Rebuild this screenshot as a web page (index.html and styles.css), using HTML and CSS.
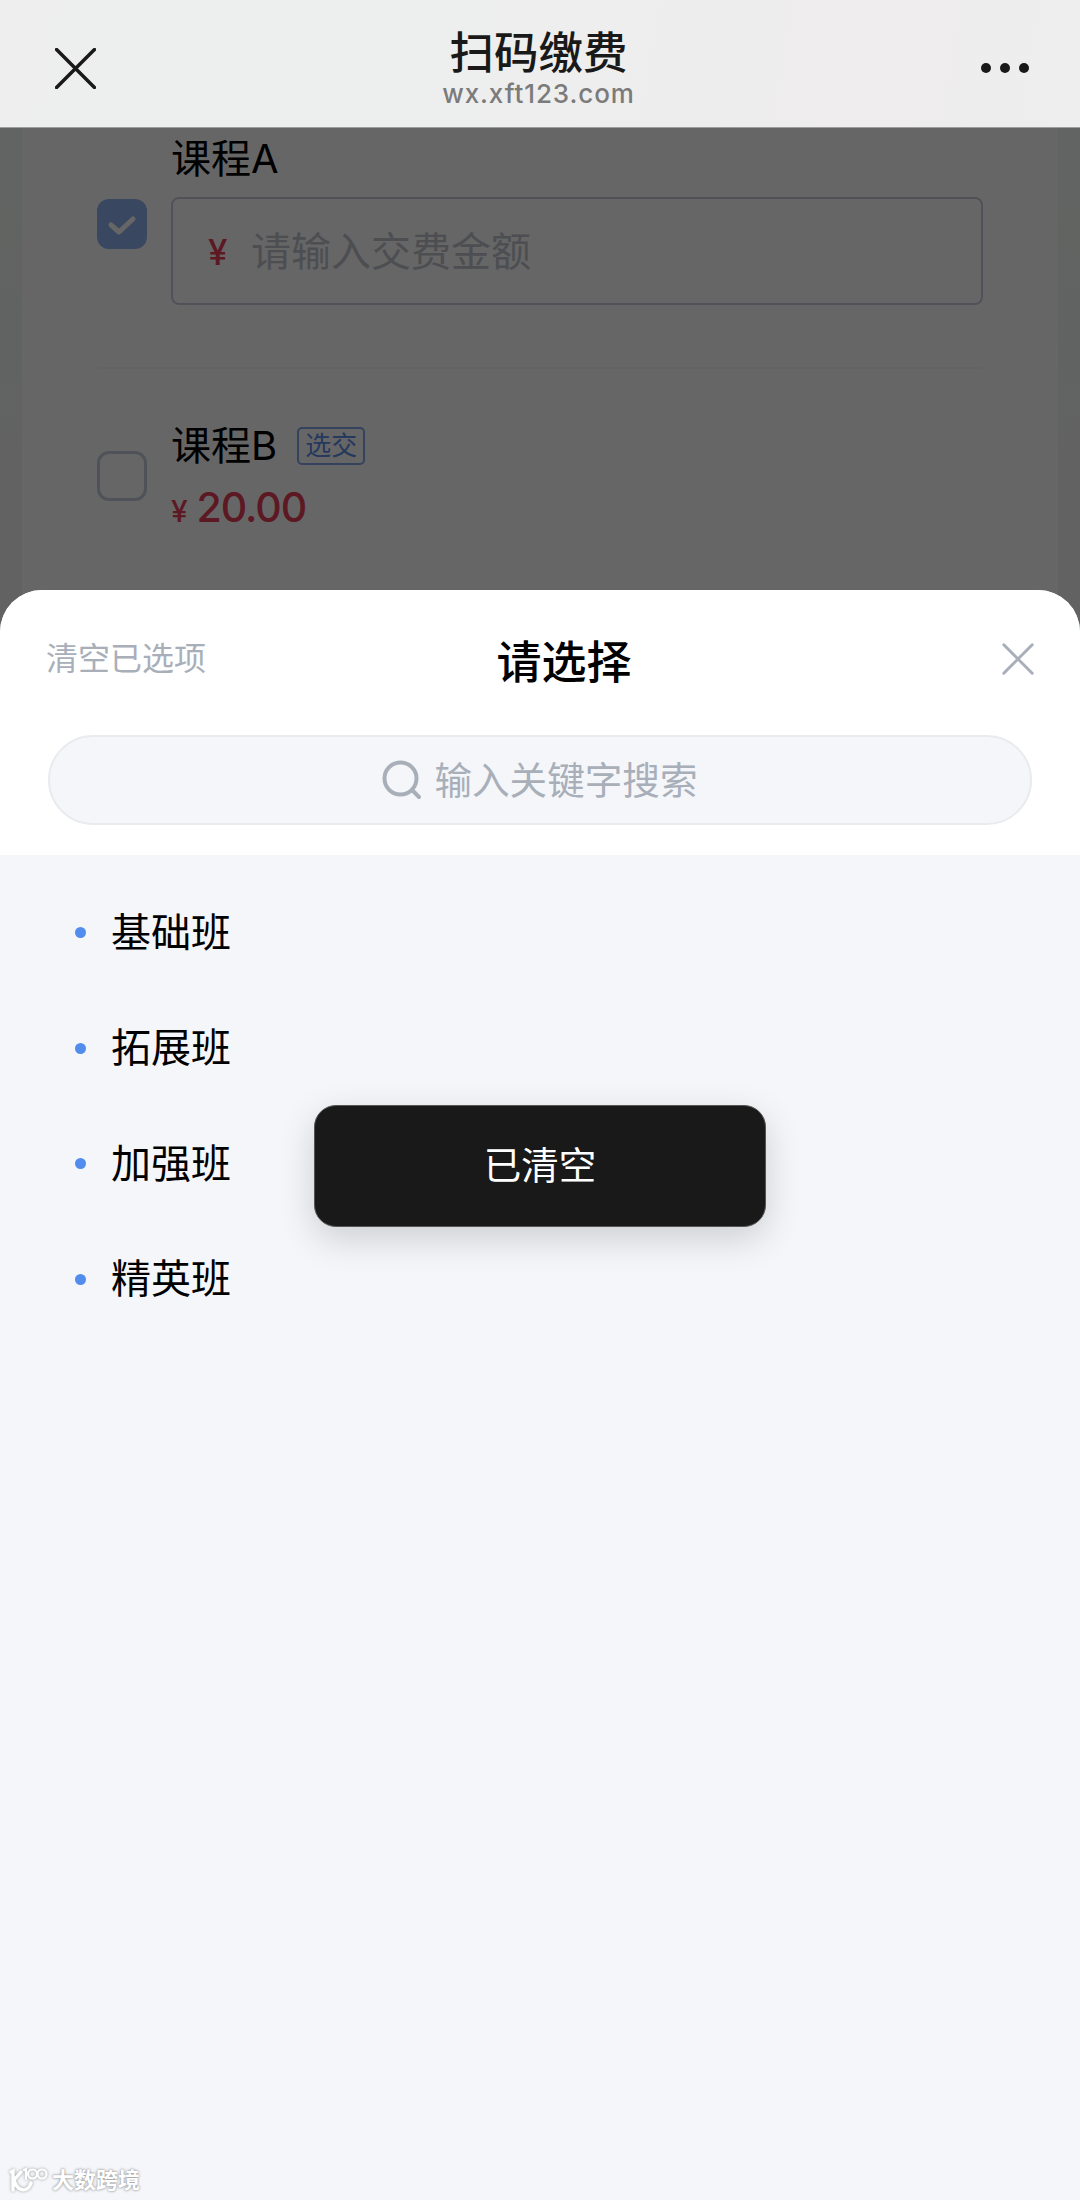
FILE: index.html
```
<!DOCTYPE html>
<html lang="zh-CN">
<head>
  <meta charset="UTF-8">
  <meta name="viewport" content="width=device-width, initial-scale=1.0">
  <title>扫码缴费</title>
  <link rel="stylesheet" href="styles.css">
</head>
<body>

  <header class="navbar">
    <svg class="nav-close" viewBox="0 0 40 40">
      <path d="M1.5 1.5 L38.5 38.5 M38.5 1.5 L1.5 38.5"/>
    </svg>
    <div class="nav-title">
      <h1>扫码缴费</h1>
      <p>wx.xft123.com</p>
    </div>
    <div class="nav-more"><i></i><i></i><i></i></div>
  </header>

  <main class="page">
    <div class="card">
      <div class="course course-a">
        <span class="checkbox checked">
          <svg viewBox="0 0 50 50"><path d="M14 26 L22 33 L36 20"/></svg>
        </span>
        <div class="course-info">
          <div class="course-name">课程A</div>
          <div class="amount-input">
            <span class="yen">¥</span>
            <span class="placeholder">请输入交费金额</span>
          </div>
        </div>
      </div>
      <div class="course course-b">
        <span class="checkbox"></span>
        <div class="course-info">
          <div class="course-name">课程B <span class="tag">选交</span></div>
          <div class="price"><span class="yen-small">¥</span><span>20.00</span></div>
        </div>
      </div>
    </div>
    <div class="mask"></div>
  </main>

  <!-- Bottom sheet -->
  <section class="sheet">
    <div class="sheet-head">
      <span class="clear">清空已选项</span>
      <h2>请选择</h2>
      <svg class="sheet-close" viewBox="0 0 32 32">
        <path d="M1.8 1.8 L30.2 30.2 M30.2 1.8 L1.8 30.2"/>
      </svg>
    </div>
    <div class="search-wrap">
      <div class="search">
        <svg class="search-icon" viewBox="0 0 40 40">
          <circle cx="18.5" cy="18.5" r="16"/>
          <path d="M30 30 L37 37"/>
        </svg>
        <span>输入关键字搜索</span>
      </div>
    </div>
    <ul class="class-list">
      <li>基础班</li>
      <li>拓展班</li>
      <li>加强班</li>
      <li>精英班</li>
    </ul>
    <div class="watermark">
      <svg viewBox="0 0 42 28">
        <path d="M3 6 L5 5 V24 M13 6 L6 14 C9 26 20 27 23 17"/>
        <path class="thin" d="M16 4 L18 3 V13"/>
        <circle class="thin" cx="24.5" cy="8" r="4.5"/>
        <circle class="thin" cx="34" cy="8" r="4.5"/>
      </svg>
      <span>大数跨境</span>
    </div>
  </section>

  <div class="toast">已清空</div>

</body>
</html>
```
FILE: styles.css
```
* {
  margin: 0;
  padding: 0;
  box-sizing: border-box;
}

body {
  position: relative;
  width: 1080px;
  height: 2200px;
  display: flex;
  flex-direction: column;
  overflow: hidden;
  background: #f4f6fa;
  color: #000;
  font-family: Inter, "Noto Sans CJK SC", sans-serif;
}

svg {
  display: block;
  fill: none;
  stroke-linecap: round;
}

/* Top bar */
.navbar {
  height: 128px;
  padding: 0 51px 0 55px;
  display: flex;
  justify-content: space-between;
  align-items: center;
  background: linear-gradient(100deg, #eeeeee 0%, #edeeee 28%, #eeeeee 50%, #efedee 82%, #eeeeee 100%);
  border-bottom: 1px solid #9b9e9d;
}

.nav-close {
  width: 41px;
  height: 41px;
  margin-top: 9px;
  stroke: #191919;
  stroke-width: 3.4;
}

.nav-title {
  padding-top: 7px;
  text-align: center;
}

.nav-title h1 {
  margin-top: 4px;
  font-size: 44.5px;
  font-weight: 500;
  line-height: 50px;
  color: #191919;
}

.nav-title p {
  font-size: 26px;
  font-weight: 500;
  line-height: 32px;
  letter-spacing: 0.9px;
  color: #7b7b7b;
}

.nav-more {
  display: flex;
  gap: 9px;
  margin-top: 9px;
}

.nav-more i {
  width: 10px;
  height: 10px;
  border-radius: 50%;
  background: #191919;
}

/* Page under the mask */
.page {
  position: relative;
  height: 511px;
  padding: 0 22px;
  background: linear-gradient(#f4faf7 0%, #f3f7f5 45%, #f5f5f5 80%);
}

.mask {
  position: absolute;
  inset: 0;
  background: rgba(0, 0, 0, 0.6);
}

.card {
  height: 100%;
  padding: 0 75px;
  background: #fff;
}

.course {
  display: flex;
  gap: 24px;
}

.course-a {
  height: 241px;
  padding-top: 6px;
  border-bottom: 2px solid #f7f7f7;
}

.course-b {
  padding-top: 52px;
}

.checkbox {
  flex: none;
  width: 50px;
  height: 50px;
  border: 3px solid #c6cede;
  border-radius: 12px;
}

.checkbox.checked {
  margin-top: 65px;
  border: none;
  background: #8fb2f0;
}

.course-b .checkbox {
  margin-top: 30px;
}

.checked svg {
  stroke: #fff;
  stroke-width: 5;
  stroke-linejoin: round;
}

.course-info {
  flex: 1;
}

.course-name {
  display: flex;
  align-items: center;
  gap: 20px;
  height: 50px;
  font-size: 40px;
  line-height: 50px;
}

.amount-input {
  height: 108px;
  margin-top: 13px;
  padding-left: 35px;
  display: flex;
  align-items: center;
  border: 2px solid #c8cedb;
  border-radius: 8px;
}

.yen {
  width: 43px;
  padding-top: 2px;
  font-size: 35px;
  font-weight: 500;
  color: #e84058;
}

.placeholder {
  padding-bottom: 5px;
  font-size: 40px;
  color: #c0c4cd;
}

.tag {
  height: 38px;
  padding: 0 6px;
  border: 2px solid #82a6e8;
  border-radius: 5px;
  font-size: 26px;
  line-height: 33px;
  color: #5c8de8;
}

.price {
  display: flex;
  align-items: baseline;
  gap: 10px;
  margin-top: 11px;
  font-size: 41px;
  font-weight: 500;
  line-height: 50px;
  letter-spacing: -1.1px;
  color: #e84058;
}

.yen-small {
  font-size: 30px;
}

/* Bottom sheet */
.sheet {
  flex: 1;
  position: relative;
  margin-top: -49px;
  display: flex;
  flex-direction: column;
  border-radius: 42px 42px 0 0;
  background: #f4f6fa;
  overflow: hidden;
}

.sheet-head {
  height: 145px;
  padding: 0 46px;
  display: flex;
  justify-content: space-between;
  background: #fff;
}

.clear {
  margin-top: 49px;
  font-size: 32px;
  line-height: 40px;
  color: #a8afb9;
}

.sheet-head h2 {
  margin: 43px 0 0;
  padding-right: 80px;
  font-size: 45px;
  font-weight: 500;
  line-height: 60px;
}

.sheet-close {
  width: 32px;
  height: 32px;
  margin-top: 53px;
  stroke: #a8afb9;
  stroke-width: 3;
}

.search-wrap {
  height: 120px;
  padding: 0 48px;
  background: #fff;
}

.search {
  height: 90px;
  display: flex;
  justify-content: center;
  align-items: center;
  gap: 12px;
  border: 2px solid #e9ebef;
  border-radius: 45px;
  background: #f4f6fa;
  font-size: 37.6px;
  color: #a8afb9;
}

.search span {
  padding-bottom: 5px;
}

.search-icon {
  width: 40px;
  height: 40px;
  stroke: #a8afb9;
  stroke-width: 4;
}

.class-list {
  flex: 1;
  padding: 20px 75px;
  list-style: none;
}

.class-list li {
  display: flex;
  align-items: center;
  gap: 25px;
  height: 115.5px;
  font-size: 40px;
  line-height: 50px;
}

.class-list li::before {
  content: "";
  width: 11px;
  height: 11px;
  border-radius: 50%;
  background: #528cec;
}

.watermark {
  display: flex;
  align-items: center;
  gap: 2px;
  padding: 0 8px 6px;
  font-size: 22px;
  font-weight: 700;
  line-height: 28px;
  color: #fff;
  text-shadow: 0 0 3px #999, 0 0 2px #aaa;
}

.watermark svg {
  width: 42px;
  height: 28px;
  stroke: #fff;
  stroke-width: 3.4;
  filter: drop-shadow(0 0 1.5px #999);
}

.watermark .thin {
  stroke-width: 2.2;
}

/* Toast sits over the list */
.toast {
  position: absolute;
  top: 1105px;
  left: 314px;
  width: 452px;
  height: 122px;
  border: 1px solid #555;
  border-radius: 22px;
  background: #191919;
  color: #fff;
  font-size: 37.5px;
  line-height: 119px;
  text-align: center;
  box-shadow: 0 12px 36px rgba(0, 0, 0, 0.16);
}
```
